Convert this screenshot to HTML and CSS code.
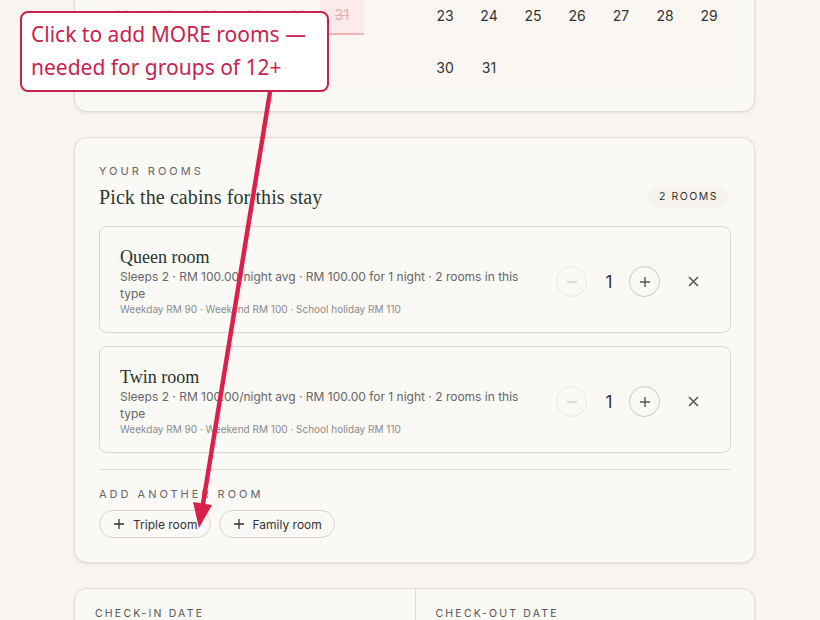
FILE: index.html
```html
<!DOCTYPE html>
<html lang="en">
<head>
    <meta charset="UTF-8">
    <meta name="viewport" content="width=device-width, initial-scale=1.0">
    <title>Book your stay</title>
    <link rel="stylesheet" href="styles.css">
</head>
<body>
    <div class="page">
        <!-- calendar, scrolled past the top -->
        <section class="card calendar-card">
            <div class="months">
                <div class="month">
                    <span class="day past">26</span>
                    <span class="day past">27</span>
                    <span class="day past">28</span>
                    <span class="day past">29</span>
                    <span class="day past">30</span>
                    <span class="day blocked">31</span>
                    <span class="day empty"></span>
                </div>
                <div class="month">
                    <span class="day">23</span>
                    <span class="day">24</span>
                    <span class="day">25</span>
                    <span class="day">26</span>
                    <span class="day">27</span>
                    <span class="day">28</span>
                    <span class="day">29</span>
                    <span class="day">30</span>
                    <span class="day">31</span>
                </div>
            </div>
        </section>

        <section class="card rooms-card">
            <p class="eyebrow">Your rooms</p>
            <div class="rooms-head">
                <h2 class="rooms-title">Pick the cabins for this stay</h2>
                <span class="badge">2 rooms</span>
            </div>

            <div class="room-list">
                <div class="room">
                    <div class="room-info">
                        <h3 class="room-name">Queen room</h3>
                        <p class="room-desc">Sleeps 2 · RM 100.00/night avg · RM 100.00 for 1 night · 2 rooms in this type</p>
                        <p class="room-rates">Weekday RM 90 · Weekend RM 100 · School holiday RM 110</p>
                    </div>
                    <div class="room-actions">
                        <button class="step disabled">
                            <svg width="12" height="12" viewBox="0 0 12 12"><path d="M1 6h10" stroke="currentColor" stroke-width="1.4"/></svg>
                        </button>
                        <span class="count">1</span>
                        <button class="step">
                            <svg width="12" height="12" viewBox="0 0 12 12"><path d="M1 6h10M6 1v10" stroke="currentColor" stroke-width="1.4"/></svg>
                        </button>
                        <button class="remove">
                            <svg width="11" height="11" viewBox="0 0 11 11"><path d="M1 1l9 9M10 1l-9 9" stroke="currentColor" stroke-width="1.5"/></svg>
                        </button>
                    </div>
                </div>

                <div class="room">
                    <div class="room-info">
                        <h3 class="room-name">Twin room</h3>
                        <p class="room-desc">Sleeps 2 · RM 100.00/night avg · RM 100.00 for 1 night · 2 rooms in this type</p>
                        <p class="room-rates">Weekday RM 90 · Weekend RM 100 · School holiday RM 110</p>
                    </div>
                    <div class="room-actions">
                        <button class="step disabled">
                            <svg width="12" height="12" viewBox="0 0 12 12"><path d="M1 6h10" stroke="currentColor" stroke-width="1.4"/></svg>
                        </button>
                        <span class="count">1</span>
                        <button class="step">
                            <svg width="12" height="12" viewBox="0 0 12 12"><path d="M1 6h10M6 1v10" stroke="currentColor" stroke-width="1.4"/></svg>
                        </button>
                        <button class="remove">
                            <svg width="11" height="11" viewBox="0 0 11 11"><path d="M1 1l9 9M10 1l-9 9" stroke="currentColor" stroke-width="1.5"/></svg>
                        </button>
                    </div>
                </div>
            </div>

            <hr class="divider">

            <p class="eyebrow">Add another room</p>
            <div class="chips">
                <button class="chip">
                    <svg width="10" height="10" viewBox="0 0 10 10"><path d="M0 5h10M5 0v10" stroke="currentColor" stroke-width="1.3"/></svg>
                    Triple room
                </button>
                <button class="chip">
                    <svg width="10" height="10" viewBox="0 0 10 10"><path d="M0 5h10M5 0v10" stroke="currentColor" stroke-width="1.3"/></svg>
                    Family room
                </button>
            </div>
        </section>

        <section class="card dates-card">
            <div class="date-field">
                <p class="eyebrow small">Check-in date</p>
            </div>
            <div class="date-field">
                <p class="eyebrow small">Check-out date</p>
            </div>
        </section>

        <!-- annotation overlay -->
        <svg class="arrow" width="820" height="620" viewBox="0 0 820 620">
            <path d="M270 92 L202 510" stroke="#dc1f4b" stroke-width="4.5" fill="none"/>
            <polygon points="199,528 212,505 193,502" fill="#dc1f4b"/>
        </svg>
        <div class="callout">Click to add MORE rooms —<br>needed for groups of 12+</div>
    </div>
</body>
</html>
```

FILE: styles.css
```css
* {
    margin: 0;
    padding: 0;
    box-sizing: border-box;
}

body {
    background-color: #f8f5f0;
    font-family: Inter, 'Liberation Sans', sans-serif;
    color: #2f2f2f;
    overflow: hidden;
}

button {
    font-family: inherit;
    background: none;
    border: none;
    cursor: pointer;
}

.page {
    position: relative;
    display: flow-root;
    width: 820px;
    height: 620px;
    padding-left: 74px;
}

.card {
    width: 681px;
    background-color: #fbf9f6;
    border: 1px solid #e3dcd2;
    border-radius: 13px;
    box-shadow: 0 1px 3px rgba(80, 60, 40, 0.12);
}

/* calendar */
.calendar-card {
    margin-top: -30px;
    padding: 24px 24px 24px 25px;
}

.months {
    display: grid;
    grid-template-columns: 308px 308px;
    gap: 15px;
    background-color: #faf7f3;
}

.month {
    display: grid;
    grid-template-columns: repeat(7, 44px);
    grid-auto-rows: 40px;
    row-gap: 12px;
}

.day {
    display: flex;
    align-items: center;
    justify-content: center;
    font-size: 14px;
    color: #333;
    padding-top: 1px;
}

.day.past {
    color: #e2dbd2;
}

.day.blocked {
    color: #e4b0b0;
    text-decoration: line-through;
    background-color: #fdeaea;
    border-bottom: 2px solid #f0b4b4;
}

/* rooms */
.rooms-card {
    margin-top: 25px;
    padding: 25px 24px 24px;
}

.eyebrow {
    font-size: 11px;
    line-height: 16px;
    letter-spacing: 3px;
    text-transform: uppercase;
    color: #666;
}

.eyebrow.small {
    font-size: 10.5px;
    letter-spacing: 2.2px;
    color: #555;
}

.rooms-head {
    display: flex;
    align-items: center;
    justify-content: space-between;
    margin-top: 5px;
}

.rooms-title {
    font-family: 'Liberation Serif', serif;
    font-weight: normal;
    font-size: 20px;
    line-height: 26px;
    letter-spacing: 0.1px;
    color: #2a3a31;
}

.badge {
    margin-right: 1px;
    padding: 0 11px;
    height: 20px;
    line-height: 20px;
    border-radius: 10px;
    background-color: #f6f3ee;
    font-size: 10.5px;
    letter-spacing: 1.5px;
    text-transform: uppercase;
    color: #333;
}

.room-list {
    display: flex;
    flex-direction: column;
    gap: 13px;
    margin-top: 16px;
}

.room {
    display: flex;
    align-items: center;
    justify-content: space-between;
    min-height: 106px;
    padding: 19px 23px 15px 20px;
    border: 1px solid #dcd5cb;
    border-radius: 8px;
    margin-right: -1px;
}

.room-info {
    width: 410px;
}

.room-name {
    font-family: 'Liberation Serif', serif;
    font-weight: normal;
    font-size: 18px;
    line-height: 22px;
    color: #26332c;
}

.room-desc {
    font-size: 12px;
    line-height: 17px;
    color: #666;
}

.room-rates {
    font-size: 10px;
    line-height: 15px;
    color: #8a8a8a;
}

.room-actions {
    display: flex;
    align-items: center;
}

.step {
    width: 31px;
    height: 31px;
    border-radius: 50%;
    border: 1px solid #cfc8be;
    color: #555;
    display: flex;
    align-items: center;
    justify-content: center;
}

.step.disabled {
    border-color: #ebe6df;
    color: #d6d0c8;
}

.count {
    width: 42px;
    padding-left: 2px;
    text-align: center;
    font-size: 17px;
    color: #333;
}

.remove {
    width: 28px;
    height: 28px;
    margin-left: 19px;
    color: #555;
    display: flex;
    align-items: center;
    justify-content: center;
}

.divider {
    border: none;
    border-top: 1px solid #e3dcd2;
    margin: 16px -1px 16px 0;
}

.chips {
    display: flex;
    gap: 8px;
    margin-top: 8px;
}

.chip {
    display: flex;
    align-items: center;
    gap: 9px;
    height: 28px;
    padding: 0 12px 0 14px;
    border: 1px solid #d9d1c6;
    border-radius: 14px;
    font-size: 12px;
    color: #333;
}

/* dates */
.dates-card {
    margin-top: 25px;
    display: grid;
    grid-template-columns: 1fr 1fr;
    height: 120px;
}

.date-field {
    padding: 17px 20px;
}

.date-field + .date-field {
    border-left: 1px solid #e3dcd2;
}

/* annotation */
.arrow {
    position: absolute;
    top: 0;
    left: 0;
}

.callout {
    position: absolute;
    top: 11px;
    left: 20px;
    width: 309px;
    padding: 5px 10px 6px 9px;
    background-color: #fff;
    border: 2px solid #c8234d;
    border-radius: 8px;
    font-family: 'Noto Sans', 'Open Sans', sans-serif;
    font-size: 21px;
    line-height: 33px;
    color: #c8234d;
}
```
